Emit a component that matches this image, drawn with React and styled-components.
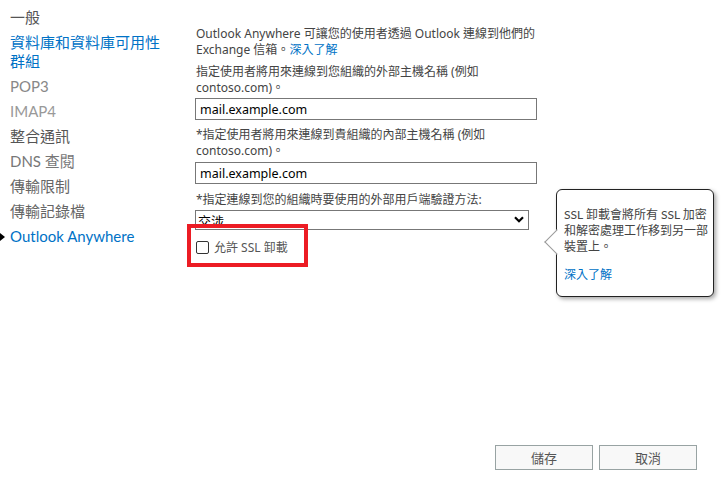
import React from "react";
import styled, { createGlobalStyle } from "styled-components";

const GlobalStyle = createGlobalStyle`
  html, body {
    margin: 0;
    padding: 0;
    background: #fff;
  }
  body {
    font-family: "Noto Sans", "Noto Sans CJK TC", sans-serif;
    color: #333;
  }
`;

const Page = styled.div`
  position: relative;
  height: 100vh;
  display: flex;
  flex-direction: column;
  overflow: hidden;
`;

const Body = styled.div`
  display: flex;
  flex: 1;
`;

const Nav = styled.ul`
  list-style: none;
  margin: 0;
  padding: 8px 0 0 10px;
  width: 186px;
  box-sizing: border-box;
`;

const NavItem = styled.li`
  position: relative;
  width: 162px;
  font-family: Lato, "Noto Sans CJK TC", sans-serif;
  font-size: 15px;
  line-height: 19px;
  margin-bottom: 6px;
  color: ${(props) => props.color};
  cursor: pointer;

  &::before {
    content: "";
    display: ${(props) => (props.active ? "block" : "none")};
    position: absolute;
    left: -10px;
    top: 6px;
    border-left: 5px solid #000;
    border-top: 4px solid transparent;
    border-bottom: 4px solid transparent;
  }
`;

const Main = styled.div`
  padding: 26px 0 0 10px;
  width: 352px;
  box-sizing: border-box;
`;

const Text = styled.p`
  margin: 0 0 ${(props) => props.gap || 3}px;
  font-size: 12px;
  line-height: 16px;
  color: #444;
`;

const Link = styled.a`
  color: #0072c6;
  text-decoration: none;
  cursor: pointer;
`;

const TextInput = styled.input`
  display: block;
  width: 342px;
  height: 22px;
  box-sizing: border-box;
  margin: 0 0 ${(props) => props.gap || 7}px -1px;
  padding: 0 4px;
  border: 1px solid #777;
  font-family: "Noto Sans", sans-serif;
  font-size: 12.5px;
  color: #000;
  outline: none;
`;

const SelectWrap = styled.div`
  position: relative;
  width: 334px;
  margin: 0 0 8px -1px;
`;

const Select = styled.select`
  appearance: none;
  display: block;
  width: 100%;
  height: 20px;
  box-sizing: border-box;
  border: 1px solid #777;
  background: #fff;
  padding: 0 2px;
  font-family: "Noto Sans CJK TC", sans-serif;
  font-size: 13px;
  color: #000;
  outline: none;
`;

const Chevron = styled.svg`
  position: absolute;
  right: 5px;
  top: 6px;
  pointer-events: none;
`;

const CheckRow = styled.label`
  display: flex;
  align-items: center;
  gap: 5px;
  font-size: 12px;
  color: #555;
`;

const Box = styled.input`
  appearance: none;
  margin: 0;
  width: 13px;
  height: 13px;
  border: 1px solid #333;
  border-radius: 2px;
  background: #fff;
`;

const Highlight = styled.div`
  position: absolute;
  left: 187px;
  top: 224px;
  width: 121px;
  height: 43px;
  box-sizing: border-box;
  border: 4px solid #ec1c24;
  pointer-events: none;
`;

const Callout = styled.div`
  position: absolute;
  left: 556px;
  top: 189px;
  width: 158px;
  height: 108px;
  box-sizing: border-box;
  padding: 17px 0 0 7px;
  border: 1px solid #222;
  border-radius: 6px;
  background: #fff;
  box-shadow: 2px 2px 4px rgba(0, 0, 0, 0.35);
  font-size: 12px;
  line-height: 16px;
  color: #444;

  &::before {
    content: "";
    position: absolute;
    left: -9px;
    top: 43px;
    width: 17px;
    height: 17px;
    background: #fff;
    border-left: 1px solid #999;
    border-bottom: 1px solid #999;
    transform: rotate(45deg);
  }
`;

const CalloutText = styled.p`
  position: relative;
  margin: 0 0 ${(props) => props.gap || 0}px;
  font-family: Lato, "Noto Sans CJK TC", sans-serif;
`;

const Footer = styled.div`
  display: flex;
  justify-content: flex-end;
  gap: 6px;
  padding: 0 25px 25px 0;
`;

const Button = styled.button`
  width: 98px;
  height: 25px;
  border: 1px solid #98a3a3;
  background: #f8f8f8;
  font-family: "Noto Sans CJK TC", sans-serif;
  font-size: 13px;
  color: #555;
  cursor: pointer;
`;

const NAV = [
  { label: "一般", color: "#555" },
  { label: "資料庫和資料庫可用性群組", color: "#0072c6" },
  { label: "POP3", color: "#888" },
  { label: "IMAP4", color: "#999" },
  { label: "整合通訊", color: "#555" },
  { label: "DNS 查閱", color: "#777" },
  { label: "傳輸限制", color: "#666" },
  { label: "傳輸記錄檔", color: "#666" },
  { label: "Outlook Anywhere", color: "#0072c6", active: true },
];

export default function App() {
  return (
    <Page>
      <GlobalStyle />
      <Body>
        <Nav>
          {NAV.map((item) => (
            <NavItem key={item.label} color={item.color} active={item.active}>
              {item.label}
            </NavItem>
          ))}
        </Nav>
        <Main>
          <Text gap={6}>
            Outlook Anywhere 可讓您的使用者透過 Outlook 連線到他們的 Exchange
            信箱。<Link>深入了解</Link>
          </Text>
          <Text gap={2}>指定使用者將用來連線到您組織的外部主機名稱 (例如 contoso.com)。</Text>
          <TextInput defaultValue="mail.example.com" />
          <Text gap={3}>*指定使用者將用來連線到貴組織的內部主機名稱 (例如 contoso.com)。</Text>
          <TextInput defaultValue="mail.example.com" gap={8} />
          <Text gap={2}>*指定連線到您的組織時要使用的外部用戶端驗證方法:</Text>
          <SelectWrap>
            <Select defaultValue="nego">
              <option value="nego">交涉</option>
              <option value="basic">基本</option>
              <option value="ntlm">NTLM</option>
            </Select>
            <Chevron width="10" height="7" viewBox="0 0 10 7">
              <path d="M1 1.2 L5 5.2 L9 1.2" fill="none" stroke="#000" strokeWidth="2.2" />
            </Chevron>
          </SelectWrap>
          <CheckRow>
            <Box type="checkbox" />
            允許 SSL 卸載
          </CheckRow>
        </Main>
      </Body>
      <Footer>
        <Button>儲存</Button>
        <Button>取消</Button>
      </Footer>
      <Highlight />
      <Callout>
        <CalloutText gap={12}>
          SSL 卸載會將所有 SSL 加密和解密處理工作移到另一部裝置上。
        </CalloutText>
        <CalloutText>
          <Link>深入了解</Link>
        </CalloutText>
      </Callout>
    </Page>
  );
}
